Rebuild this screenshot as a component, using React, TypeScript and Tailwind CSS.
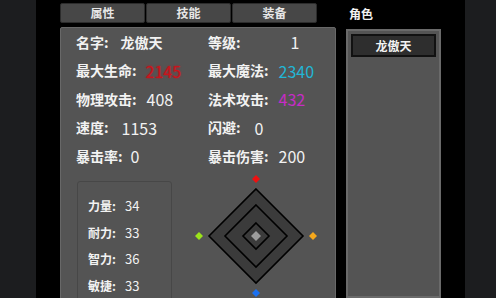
const tabs = ['属性', '技能', '装备'];

type Stat = { label: string; value: string; color?: string; gap: string; bold?: boolean };

const leftStats: Stat[] = [
  { label: '名字', value: '龙傲天', gap: 'ml-[12px]', bold: true },
  { label: '最大生命', value: '2145', color: 'text-[#c8141c] [text-shadow:0_0_2px_#c8141c]', gap: 'ml-[9px]' },
  { label: '物理攻击', value: '408', gap: 'ml-[10px]' },
  { label: '速度', value: '1153', gap: 'ml-[13px]' },
  { label: '暴击率', value: '0', gap: 'ml-[8px]' },
];

const rightStats: Stat[] = [
  { label: '等级', value: '1', gap: 'ml-[50px]' },
  { label: '最大魔法', value: '2340', color: 'text-[#22b6d6]', gap: 'ml-[10px]' },
  { label: '法术攻击', value: '432', color: 'text-[#c62cc6]', gap: 'ml-[10px]' },
  { label: '闪避', value: '0', gap: 'ml-[14px]' },
  { label: '暴击伤害', value: '200', gap: 'ml-[10px]' },
];

const attrs = [
  { label: '力量', value: '34' },
  { label: '耐力', value: '33' },
  { label: '智力', value: '36' },
  { label: '敏捷', value: '33' },
];

const diamond = (cx: number, cy: number, r: number) =>
  `${cx},${cy - r} ${cx + r},${cy} ${cx},${cy + r} ${cx - r},${cy}`;

const StatRow = ({ s }: { s: Stat }) => (
  <div className="h-[28.5px] flex items-center">
    <span>{s.label}:</span>
    <span
      className={`${s.gap} ${s.color ?? 'text-[#f2f2f2]'} ${s.bold ? 'font-bold' : 'font-normal text-[16px]'}`}
    >
      {s.value}
    </span>
  </div>
);

const Radar = () => (
  <svg width="130" height="124" viewBox="0 0 130 124" className="ml-[19px] shrink-0">
    <polygon points={diamond(65, 63, 47)} fill="#3b3b3b" stroke="#000" strokeWidth="1.6" />
    <polygon points={diamond(65, 63, 31)} fill="#3b3b3b" stroke="#000" strokeWidth="1.6" />
    <polygon points={diamond(65, 63, 13)} fill="#3b3b3b" stroke="#000" strokeWidth="1.6" />
    <polygon points={diamond(65, 63, 5)} fill="#9c9c9c" />
    <polygon points={diamond(65, 6, 4)} fill="#ee1111" />
    <polygon points={diamond(8, 63, 4)} fill="#9be41a" />
    <polygon points={diamond(122, 63, 4)} fill="#f6a81c" />
    <polygon points={diamond(65, 120, 4)} fill="#1a70f0" />
  </svg>
);

export default function App() {
  return (
    <div className="w-[496px] h-[298px] flex overflow-hidden bg-black text-[#f2f2f2] [font-family:'Noto_Sans_CJK_SC',sans-serif]">
      <div className="w-[36px] shrink-0 bg-[#1c1d1f]" />
      <div className="flex-1 flex pl-[24px]">
        {/* left: tabs + attribute panel */}
        <div className="w-[276px] shrink-0 flex flex-col">
          <div className="flex gap-[1px] mt-[3px] h-[22px]">
            {tabs.map((t) => (
              <div
                key={t}
                className="w-[85px] flex items-center justify-center bg-[#474747] border border-[#2c2c2c] rounded-[2px] text-[12px] font-bold text-[#e6e6e6]"
              >
                {t}
              </div>
            ))}
          </div>
          <div className="mt-[4px] flex-1 bg-[#545454] border border-[#686868] rounded-[2px] text-[14px] font-bold">
            <div className="flex pl-[15px]">
              <div className="w-[132px]">
                {leftStats.map((s) => (
                  <StatRow key={s.label} s={s} />
                ))}
              </div>
              <div>
                {rightStats.map((s) => (
                  <StatRow key={s.label} s={s} />
                ))}
              </div>
            </div>
            <div className="flex items-start mt-[2px] pl-[16px]">
              <div className="mt-[8px] w-[95px] h-[130px] border border-[#474747] rounded-[3px] pt-[11px] pl-[10px] text-[12px]">
                {attrs.map((a) => (
                  <div key={a.label} className="h-[26.7px] flex items-center">
                    <span className="w-[37px]">{a.label}:</span>
                    <span className="font-normal text-[13px]">{a.value}</span>
                  </div>
                ))}
              </div>
              <Radar />
            </div>
          </div>
        </div>
        {/* right: character list */}
        <div className="ml-[10px] w-[95px] shrink-0 flex flex-col">
          <div className="h-[29px] pl-[3px] pt-[5px] text-[12px] font-bold">角色</div>
          <div className="flex-1 bg-[#545454] border-2 border-[#6a6a6a] pt-[3px] px-[3px]">
            <div className="h-[23px] flex items-center justify-center bg-[#2e2e2e] border-2 border-[#111] text-[12px] font-bold">
              龙傲天
            </div>
          </div>
        </div>
      </div>
      <div className="w-[31px] shrink-0 bg-[#1c1d1f]" />
    </div>
  );
}
